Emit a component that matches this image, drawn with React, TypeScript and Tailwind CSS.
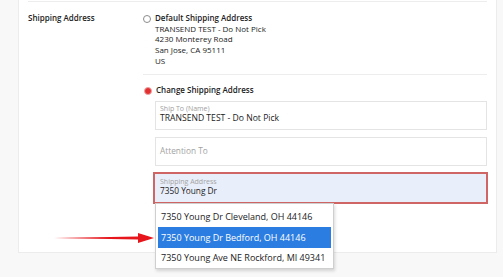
import React from "react";

function Radio({ checked }: { checked?: boolean }) {
  if (checked) {
    return (
      <span className="block w-[8px] h-[8px] rounded-full bg-[#e23030] border border-[#f0a0a0] shrink-0" />
    );
  }
  return <span className="block w-[8px] h-[8px] rounded-full border border-[#8c8c8c] bg-white shrink-0" />;
}

const suggestions = [
  "7350 Young Dr Cleveland, OH 44146",
  "7350 Young Dr Bedford, OH 44146",
  "7350 Young Ave NE Rockford, MI 49341",
];

export default function App() {
  return (
    <div className="w-[503px] h-[277px] bg-[#f8f8f8] overflow-hidden relative text-[#222] font-['Open_Sans','Noto_Sans',sans-serif]">
      <div className="ml-[18px] w-[479px] h-[253px] bg-white border-x border-b border-[#ececec] px-[9px] pt-[1px]">
        <div className="border-t border-[#ededed] flex pt-[11.2px]">
          {/* label column */}
          <div className="w-[115px] shrink-0 text-[8px] font-semibold leading-[10.6px]">
            Shipping Address
          </div>

          {/* options column */}
          <div className="flex-1">
            <div className="flex items-start gap-[4px]">
              <span className="mt-[1.5px]">
                <Radio />
              </span>
              <div className="text-[8px] leading-[10.6px]">
                <div className="font-semibold">Default Shipping Address</div>
                <div>TRANSEND TEST - Do Not Pick</div>
                <div>4230 Monterey Road</div>
                <div>San Jose, CA 95111</div>
                <div>US</div>
              </div>
            </div>

            <div className="border-t border-[#ededed] mt-[8px] pt-[10.2px]">
              <div className="flex items-center gap-[4px] pl-[1px]">
                <Radio checked />
                <div className="text-[8px] leading-[10.6px] font-semibold">Change Shipping Address</div>
              </div>

              <div className="ml-[12px] mt-[5px] flex flex-col">
                <div className="h-[29px] border border-[#e4e4e4] pl-[4px] pt-[2.5px]">
                  <div className="text-[7px] leading-[9px] text-[#a0a0a0]">Ship To (Name)</div>
                  <div className="text-[8.6px] leading-[10px]">TRANSEND TEST - Do Not Pick</div>
                </div>
                <div className="h-[29px] mt-[7px] border border-[#e4e4e4] pl-[4px] flex items-center">
                  <div className="text-[8.3px] text-[#a3a3a3]">Attention To</div>
                </div>
                <div className="relative mt-[6px] -ml-[2px] -mr-[1px]">
                  <div className="h-[32px] border-2 border-[#d06565] bg-[#e8eefa] pl-[5px] pt-[3px]">
                    <div className="text-[7px] leading-[9px] text-[#a4a4a4]">Shipping Address</div>
                    <div className="text-[8.3px] leading-[10px]">7350 Young Dr</div>
                  </div>
                  {/* autocomplete suggestions */}
                  <div className="absolute left-[2px] top-[31px] w-[179px] h-[66px] bg-white border border-[#cfcfcf] shadow-[1px_2px_3px_rgba(0,0,0,0.15)] pt-[3px] px-[2px]">
                    {suggestions.map((s, i) => (
                      <div
                        key={s}
                        className={
                          i === 1
                            ? "h-[20.5px] flex items-center pl-[3px] whitespace-nowrap text-[9px] bg-[#2b7de1] text-white"
                            : "h-[20.5px] flex items-center pl-[3px] whitespace-nowrap text-[9px] text-[#222]"
                        }
                      >
                        {s}
                      </div>
                    ))}
                  </div>
                </div>
              </div>
            </div>
          </div>
        </div>
      </div>

      {/* red annotation arrow */}
      <svg className="absolute left-[52px] top-[231px]" width="104" height="14" viewBox="0 0 104 14">
        <path d="M2 7 L86 5.6 L86 2 L102 7 L86 12 L86 8.4 Z" fill="#e6161c" />
      </svg>
    </div>
  );
}
